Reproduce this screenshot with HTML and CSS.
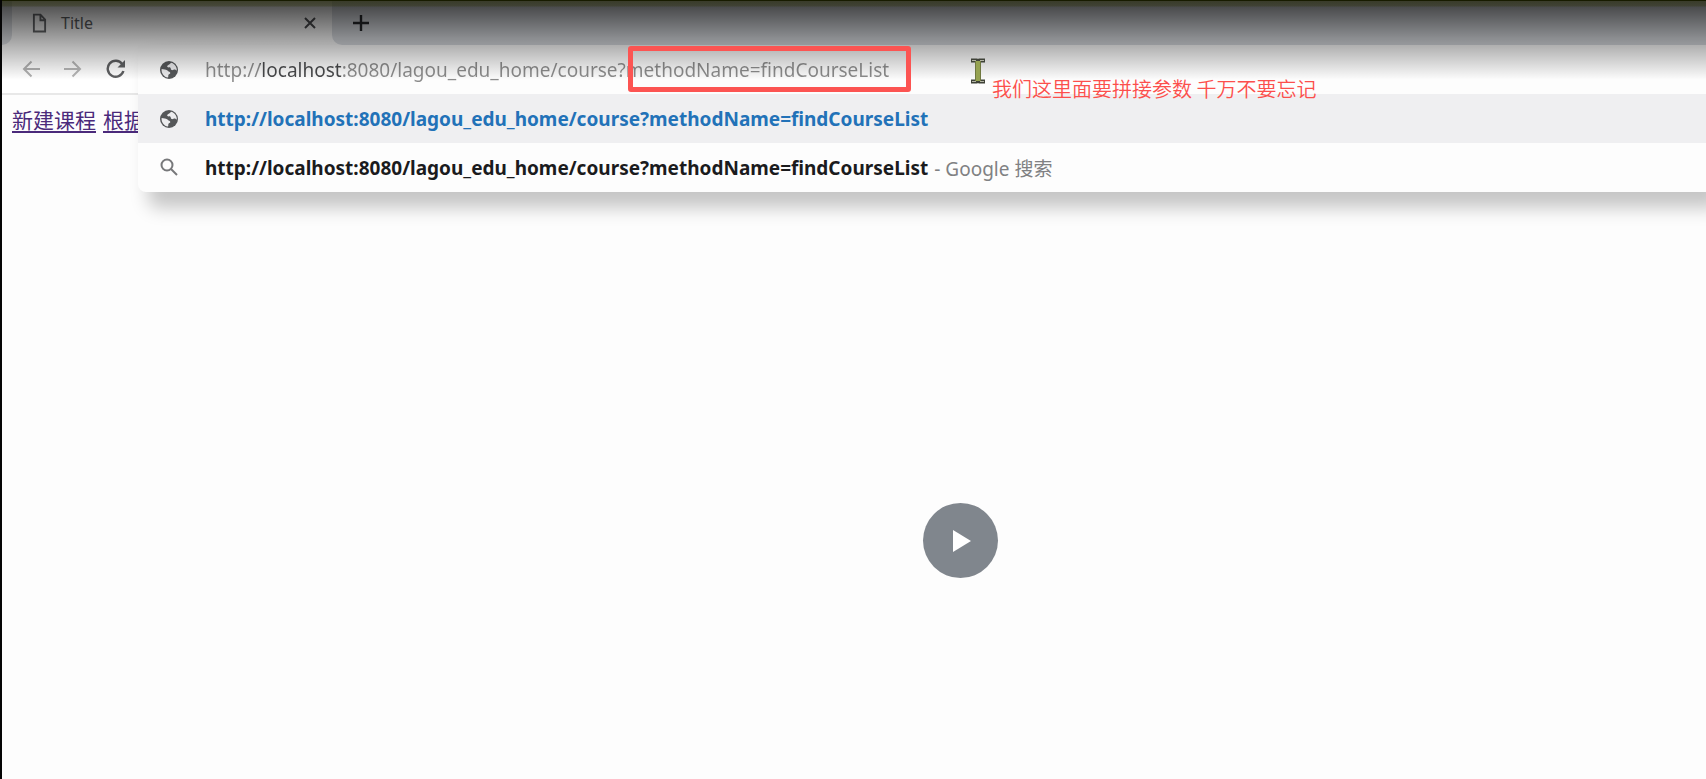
FILE: index.html
```html
<!DOCTYPE html>
<html lang="zh-CN">
<head>
<meta charset="utf-8">
<title>Title</title>
<link rel="stylesheet" href="styles.css">
</head>
<body>
<svg class="symbols" aria-hidden="true">
  <symbol id="globe" viewBox="0 0 20 20">
    <circle cx="10" cy="10" r="9" fill="#555759"/>
    <path d="M2.600 9c2 .6 5 .2 6.200 1.700.8 1.200 2.500.9 2.500 2.300 0 1.200-1.800 1-2 2.200-.1.900.2 1.600-.4 2.400C5.200 17 2.200 13.500 2.600 9zM12.500 2.800c-1.500.8-1.800 1.600-3.200 2.100-1 .4-1.500 1.300-.8 2.100.8.9 2.200-.1 2.900.7.800 1 .2 2.100 1.400 2.400 1.500.4 2-.9 3.300-.5.6.3.900.9 1.700.8C18 7 15.600 4 12.500 2.800z" fill="#ececee"/>
  </symbol>
</svg>
<div class="browser">
  <header class="tabs">
    <div class="tab-edge"></div>
    <div class="tab">
      <svg class="file-icon" viewBox="0 0 16 20" fill="none" stroke="#66686b" stroke-width="2"><path d="M2 1h7l5 5.500V19H2zM9 1v6h5"/></svg>
      <span class="tab-title">Title</span>
      <button class="plain close" aria-label="关闭"><svg viewBox="0 0 12 12" width="12" height="12" stroke="#4b4d50" stroke-width="2"><path d="M1 1l10 10M11 1L1 11"/></svg></button>
    </div>
    <div class="tab-rest">
      <button class="plain" aria-label="新标签页"><svg viewBox="0 0 16 16" width="16" height="16" stroke="#292b2e" stroke-width="2.400"><path d="M8 0v16M0 8h16"/></svg></button>
    </div>
  </header>
  <nav class="toolbar">
    <button class="plain" aria-label="后退"><svg viewBox="0 0 18 18" width="18" height="18" fill="none" stroke="#b0b0b0" stroke-width="2"><path d="M18 9H2M9.500 1.500L2 9l7.500 7.500"/></svg></button>
    <button class="plain" aria-label="前进"><svg viewBox="0 0 18 18" width="18" height="18" fill="none" stroke="#b6b6b6" stroke-width="2"><path d="M0 9h16M8.500 1.500L16 9l-7.500 7.500"/></svg></button>
    <button class="plain" aria-label="重新加载"><svg viewBox="0 0 20 20" width="20" height="20" fill="none" stroke="#5f6062" stroke-width="2.400"><path d="M16.200 5A8 8 0 1 0 17.400 12"/><path d="M19 1v7.500h-7.500z" fill="#5f6062" stroke="none"/></svg></button>
  </nav>
  <main class="page">
    <a href="#new">新建课程</a>
    <a href="#find">根据</a>
  </main>
  <section class="omnibox">
    <div class="row">
      <svg class="icon"><use href="#globe"/></svg>
      <input class="address" type="text" aria-label="地址" value="http://localhost:8080/lagou_edu_home/course?methodName=findCourseList">
    </div>
    <a class="row selected" href="#go">
      <svg class="icon"><use href="#globe"/></svg>
      <b>http://localhost:8080/lagou_edu_home/course?methodName=findCourseList</b>
    </a>
    <a class="row" href="#search">
      <svg class="icon" viewBox="0 0 20 20" fill="none" stroke="#77787a" stroke-width="2"><circle cx="8" cy="7" r="5.500"/><path d="M12 11l6 6"/></svg>
      <b>http://localhost:8080/lagou_edu_home/course?methodName=findCourseList</b>
      <span class="hint">- Google 搜索</span>
    </a>
  </section>
  <div class="shade"></div>
  <div class="highlight"></div>
  <svg class="cursor" viewBox="0 0 16 26"><path d="M1 2.500h5.500L8 4l1.500-1.500H15M1 23.500h5.500L8 22l1.500 1.500H15" fill="none" stroke="#3f4238" stroke-width="4"/><path d="M8 3v20" stroke="#6f7840" stroke-width="6"/><path d="M8 3v20" stroke="#95a250" stroke-width="4"/><path d="M2 2.500h4M10 2.500h4M2 23.500h4M10 23.500h4" stroke="#b3b5a5" stroke-width="1"/></svg>
  <p class="note">我们这里面要拼接参数 千万不要忘记</p>
  <button class="play" aria-label="播放"><svg viewBox="0 0 18 22" width="18" height="22"><path d="M0 0l18 11L0 22z" fill="#fff"/></svg></button>
</div>
</body>
</html>
```
FILE: styles.css
```css
* { box-sizing: border-box; }
body {
  margin: 0;
  background: #fdfdfd;
  font-family: "Noto Sans", "Noto Sans CJK SC", sans-serif;
}
.symbols { position: absolute; width: 0; height: 0; }
.browser {
  position: relative;
  min-height: 100vh;
  overflow: hidden;
  border-left: 2px solid #050505;
}
.plain { display: flex; padding: 0; border: 0; background: none; }

.tabs { display: flex; height: 45px; background: #fff; }
.tab-edge { width: 10px; background: #dee1e6; border-bottom-right-radius: 10px; }
.tab { display: flex; align-items: center; width: 320px; padding: 0 16px 0 20px; }
.file-icon { width: 15px; height: 20px; }
.tab-title { margin-left: 14px; font-size: 16px; color: #5c5e61; }
.close { margin-left: auto; }
.tab-rest {
  display: flex;
  flex: 1;
  align-items: center;
  padding-left: 21px;
  background: #dee1e6;
  border-bottom-left-radius: 10px;
}

.toolbar {
  display: flex;
  align-items: center;
  gap: 24px;
  height: 50px;
  padding-left: 20px;
  background: #fff;
  border-bottom: 2px solid #e8e8e8;
}

.page {
  display: flex;
  gap: 7px;
  padding: 9px 10px;
  font-size: 21px;
  line-height: 32px;
  white-space: nowrap;
}
.page a { color: #4b2a7b; text-underline-offset: 3px; text-decoration-thickness: 2px; }

.omnibox {
  position: absolute;
  top: 45px;
  left: 136px;
  right: 0;
  background: #fdfdfd;
  border-bottom-left-radius: 8px;
  box-shadow: 12px 14px 18px 2px rgba(0, 0, 0, .22);
}
.row {
  display: flex;
  align-items: center;
  height: 49px;
  padding-left: 21px;
  font-size: 19px;
  color: #1b1b1d;
  text-decoration: none;
  white-space: nowrap;
}
.selected { background: #efeff1; color: #2272b8; }
.icon { flex: none; width: 20px; height: 20px; margin-right: 26px; }
.row b { font-weight: 700; }
.hint { margin-left: 6px; color: #808183; }
.address {
  flex: 1;
  padding: 0;
  border: 0;
  outline: 0;
  font: inherit;
  color: #8c8c8c;
  -webkit-text-fill-color: transparent;
  background: linear-gradient(90deg, #8c8c8c 55px, #48494b 55px, #48494b 137px, #8c8c8c 137px);
  -webkit-background-clip: text;
  background-clip: text;
}

.shade {
  position: absolute;
  inset: 0 0 auto;
  height: 80px;
  border-top: 1px solid #171b00;
  background: linear-gradient(rgba(52, 56, 20, .5), rgba(52, 56, 20, .4) 5px, transparent 6px),
    linear-gradient(rgba(0, 0, 0, .72), rgba(0, 0, 0, .31) 44px, transparent);
  pointer-events: none;
}
.highlight {
  position: absolute;
  top: 46px;
  left: 626px;
  width: 283px;
  height: 46px;
  border: 5px solid #fc5452;
  border-radius: 3px;
  pointer-events: none;
}
.cursor { position: absolute; top: 58px; left: 968px; width: 16px; height: 26px; }
.note {
  position: absolute;
  top: 74px;
  left: 990px;
  margin: 0;
  font-family: "Noto Sans CJK SC", sans-serif;
  font-size: 20px;
  font-weight: 350;
  line-height: 30px;
  color: #fc4f4c;
  white-space: nowrap;
}
.play {
  position: absolute;
  top: 503px;
  left: 921px;
  display: flex;
  align-items: center;
  justify-content: center;
  width: 75px;
  height: 75px;
  padding: 0 0 0 3px;
  border: 0;
  border-radius: 50%;
  background: #80868d;
}
```
